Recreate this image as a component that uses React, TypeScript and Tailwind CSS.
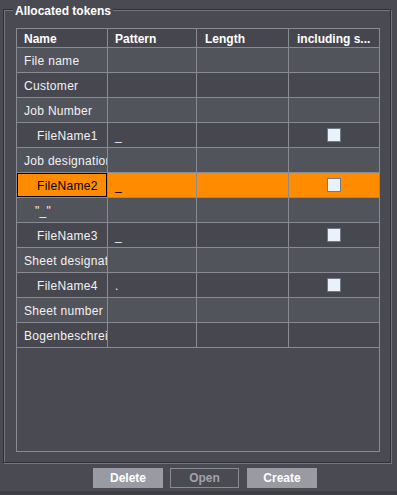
import React from "react";

// ─── Data ────────────────────────────────────────────────────────────────────

type Token = {
  name: string;
  indent?: number;
  pattern?: string;
  checkbox?: boolean;
  selected?: boolean;
};

const TOKENS: Token[] = [
  { name: "File name" },
  { name: "Customer" },
  { name: "Job Number" },
  { name: "FileName1", indent: 20, pattern: "_", checkbox: true },
  { name: "Job designation" },
  { name: "FileName2", indent: 20, pattern: "_", checkbox: true, selected: true },
  { name: "\"_\"", indent: 18 },
  { name: "FileName3", indent: 20, pattern: "_", checkbox: true },
  { name: "Sheet designation" },
  { name: "FileName4", indent: 20, pattern: ".", checkbox: true },
  { name: "Sheet number" },
  { name: "Bogenbeschreibung" },
];

const COLS = "grid grid-cols-[91px_89px_92px_90px]";

function CheckBox() {
  return <div className="h-[14px] w-[14px] border border-[#6f7a8b] bg-[#e9f1f9]" />;
}

function TokenRow({ token, index }: { token: Token; index: number }) {
  const bg = token.selected
    ? "bg-[#ff8c00]"
    : index % 2 === 0
      ? "bg-[#52545c]"
      : "bg-[#47474f]";
  const text = token.selected ? "text-black" : "text-[#f2f2f2]";
  const cell = "h-[25px] border-b border-[#8a8a92] overflow-hidden whitespace-nowrap";

  return (
    <div className={`${COLS} ${bg} ${text}`}>
      <div className={`${cell} border-r`}>
        <div
          className={`flex h-full items-center pt-[1px] ${token.selected ? "border border-black" : ""}`}
          style={{ paddingLeft: (token.indent ?? 7) - (token.selected ? 1 : 0) }}
        >
          {token.name}
        </div>
      </div>
      <div className={`${cell} border-r flex items-center pl-[7px] pt-[2px]`}>{token.pattern}</div>
      <div className={`${cell} border-r`} />
      <div className={`${cell} flex items-center justify-center pr-[1px]`}>
        {token.checkbox && <CheckBox />}
      </div>
    </div>
  );
}

// ─── App ─────────────────────────────────────────────────────────────────────

export default function App() {
  return (
    <div className="flex h-[495px] w-[397px] flex-col overflow-hidden bg-[#4a4a52] pl-[3px] pt-[9px] font-['Liberation_Sans',Arial,sans-serif] text-[12px] leading-[14px] tracking-[0.3px] text-[#f2f2f2]">
      {/* Group box */}
      <div className="relative h-[454px] w-[388px] border border-[#2f2f35] pb-[10px] pl-[12px] pt-[18px] shadow-[inset_1px_1px_0_#75757d,1px_1px_0_#75757d]">
        <span className="absolute left-[9px] top-[-6px] bg-[#4a4a52] px-[2px] font-bold tracking-normal text-white">
          Allocated tokens
        </span>

        {/* Table */}
        <div className="h-[424px] w-[364px] border border-[#8a8a92] bg-[#4a4a52]">
          <div className={`${COLS} bg-[#46464e] font-bold tracking-normal text-white`}>
            <div className="h-[19px] border-b border-r border-[#8a8a92] pl-[7px] pt-[3px]">Name</div>
            <div className="h-[19px] border-b border-r border-[#8a8a92] pl-[7px] pt-[3px]">Pattern</div>
            <div className="h-[19px] border-b border-r border-[#8a8a92] pl-[8px] pt-[3px]">Length</div>
            <div className="h-[19px] border-b border-[#8a8a92] pl-[8px] pt-[3px] whitespace-nowrap">
              including s...
            </div>
          </div>
          {TOKENS.map((t, i) => (
            <TokenRow key={t.name} token={t} index={i} />
          ))}
        </div>
      </div>

      {/* Buttons */}
      <div className="ml-[90px] mt-[5px] flex gap-[8px] font-bold tracking-normal">
        <button className="h-[20px] w-[70px] bg-[#9a9aa2] text-white">Delete</button>
        <button className="ml-[-1px] h-[20px] w-[69px] border border-[#8a8a92] text-[#a2a2aa]">Open</button>
        <button className="h-[20px] w-[70px] bg-[#9a9aa2] text-white">Create</button>
      </div>

      <div className="-ml-[3px] mt-auto h-[4px] w-[397px] bg-[#3d3d43]" />
    </div>
  );
}
